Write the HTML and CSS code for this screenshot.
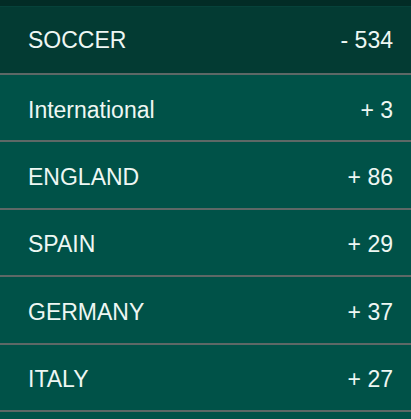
FILE: index.html
```html
<!DOCTYPE html>
<html lang="en">
<head>
    <meta charset="UTF-8">
    <meta name="viewport" content="width=device-width, initial-scale=1.0">
    <title>Sports</title>
    <link rel="stylesheet" href="styles.css">
</head>
<body>
    <div class="topbar"></div>
    <div class="menu">
        <div class="row head">
            <span class="name">SOCCER</span>
            <span class="count">- 534</span>
        </div>
        <div class="row">
            <span class="name">International</span>
            <span class="count">+ 3</span>
        </div>
        <div class="row">
            <span class="name">ENGLAND</span>
            <span class="count">+ 86</span>
        </div>
        <div class="row">
            <span class="name">SPAIN</span>
            <span class="count">+ 29</span>
        </div>
        <div class="row">
            <span class="name">GERMANY</span>
            <span class="count">+ 37</span>
        </div>
        <div class="row">
            <span class="name">ITALY</span>
            <span class="count">+ 27</span>
        </div>
    </div>
</body>
</html>
```

FILE: styles.css
```css
body {
    margin: 0;
    font-family: "Liberation Sans", Arial, sans-serif;
    background-color: #005248;
    color: #eef7f3;
}
.topbar {
    height: 6px;
    background-color: #022c26;
    border-bottom: 1px solid #06423a;
}
.menu {
    display: flex;
    flex-direction: column;
}
.row {
    display: flex;
    align-items: center;
    justify-content: space-between;
    box-sizing: border-box;
    height: 67.4px;
    padding: 5px 18px 0 28px;
    font-size: 23px;
    background-color: #005248;
    border-bottom: 2px solid #5d6866;
}
.row.head {
    height: 68px;
    padding-top: 0;
    background-color: #033b33;
}
```
